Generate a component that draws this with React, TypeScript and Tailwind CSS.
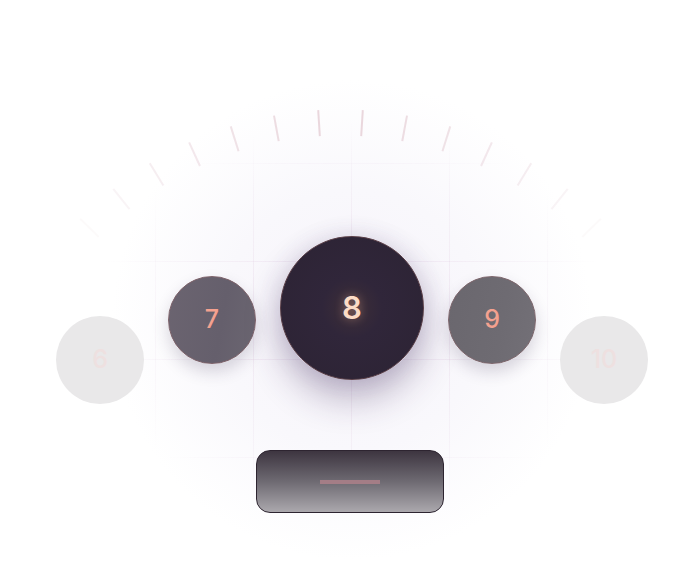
import React from 'react'

const TICKS = [-6, -5, -4, -3, -2, -1, 0, 1, 2, 3, 4, 5, 6, 7].map((k) => {
  // ticks sit on an arc, 7deg apart, half-step off centre
  const deg = (k - 0.5) * 7
  return deg
})

function Dial() {
  const cx = 340.5
  const cy = 474.5
  const rIn = 339
  const rOut = 365
  return (
    <svg className="absolute inset-0 pointer-events-none" width="700" height="576" viewBox="0 0 700 576">
      {TICKS.map((deg) => {
        const a = (deg * Math.PI) / 180
        const s = Math.sin(a)
        const c = Math.cos(a)
        const op = Math.max(0, 1 - Math.abs(deg) / 52)
        return (
          <line
            key={deg}
            x1={cx + rIn * s}
            y1={cy - rIn * c}
            x2={cx + rOut * s}
            y2={cy - rOut * c}
            stroke="#e8d4db"
            strokeWidth="2"
            strokeOpacity={op}
          />
        )
      })}
    </svg>
  )
}

function Side({ n, faded, tone }: { n: number; faded?: boolean; tone?: 'warm' | 'cool' }) {
  if (faded) {
    return (
      <div className="w-[88px] h-[88px] shrink-0 rounded-full bg-[#e9e8e9] flex items-center justify-center">
        <span className="text-[25px] font-medium text-[#eee0e0]">{n}</span>
      </div>
    )
  }
  return (
    <div
      className={
        tone === 'cool'
          ? 'w-[88px] h-[88px] shrink-0 rounded-full bg-[linear-gradient(100deg,#6a676e,#6e6b72_60%,#737077)] border border-[#7d666c] shadow-[0_8px_16px_rgba(50,40,70,0.18)] flex items-center justify-center'
          : 'w-[88px] h-[88px] shrink-0 rounded-full bg-[linear-gradient(100deg,#6b6470,#655f6c_60%,#6b6671)] border border-[#7d626a] shadow-[0_8px_16px_rgba(50,40,70,0.18)] flex items-center justify-center'
      }
    >
      <span className="text-[25px] font-medium text-[#f4a18f]">{n}</span>
    </div>
  )
}

export default function App() {
  return (
    <div className="relative w-[700px] h-[576px] overflow-hidden bg-white font-['Inter',sans-serif]">
      {/* soft glow + grid */}
      <div className="absolute inset-0 bg-[radial-gradient(circle_at_352px_320px,#f6f3fa_0px,#f9f8fc_130px,#ffffff_240px)]" />
      <div className="absolute inset-0 bg-[linear-gradient(to_right,rgba(220,195,220,0.22)_1px,transparent_1px),linear-gradient(to_bottom,rgba(220,195,220,0.22)_1px,transparent_1px)] bg-[size:98px_98px] bg-[position:57px_65px] [mask-image:radial-gradient(ellipse_260px_200px_at_351px_320px,black_40%,rgba(0,0,0,0.5)_75%,transparent_100%)]" />
      <Dial />

      <div className="relative flex flex-col items-center pt-[236px] pl-[4px]">
        <div className="flex items-start gap-6">
          <div className="mt-[80px]">
            <Side n={6} faded />
          </div>
          <div className="mt-[40px]">
            <Side n={7} />
          </div>
          <div className="w-[144px] h-[144px] shrink-0 rounded-full border border-[#5a3f48] bg-[radial-gradient(circle_at_50%_50%,#3e2f38_0px,#30263a_30px,#2c2333_100%)] shadow-[0_18px_36px_rgba(55,35,85,0.32),0_0_24px_rgba(90,70,130,0.12)] flex items-center justify-center">
            <span className="text-[31px] font-semibold text-[#fcdcc6] [text-shadow:0_0_10px_rgba(250,190,160,0.45)]">8</span>
          </div>
          <div className="mt-[40px]">
            <Side n={9} tone="cool" />
          </div>
          <div className="mt-[80px]">
            <Side n={10} faded />
          </div>
        </div>

        <button className="mt-[46px] mr-[4px] w-[188px] h-[63px] rounded-[14px] border-[1.5px] border-[#2d2430] bg-[linear-gradient(to_bottom,#3d3540,#6e6a72_50%,#aba8ad)] flex items-center justify-center">
          <span className="w-[60px] h-[4px] bg-[#a47d86]" />
        </button>
      </div>
    </div>
  )
}
